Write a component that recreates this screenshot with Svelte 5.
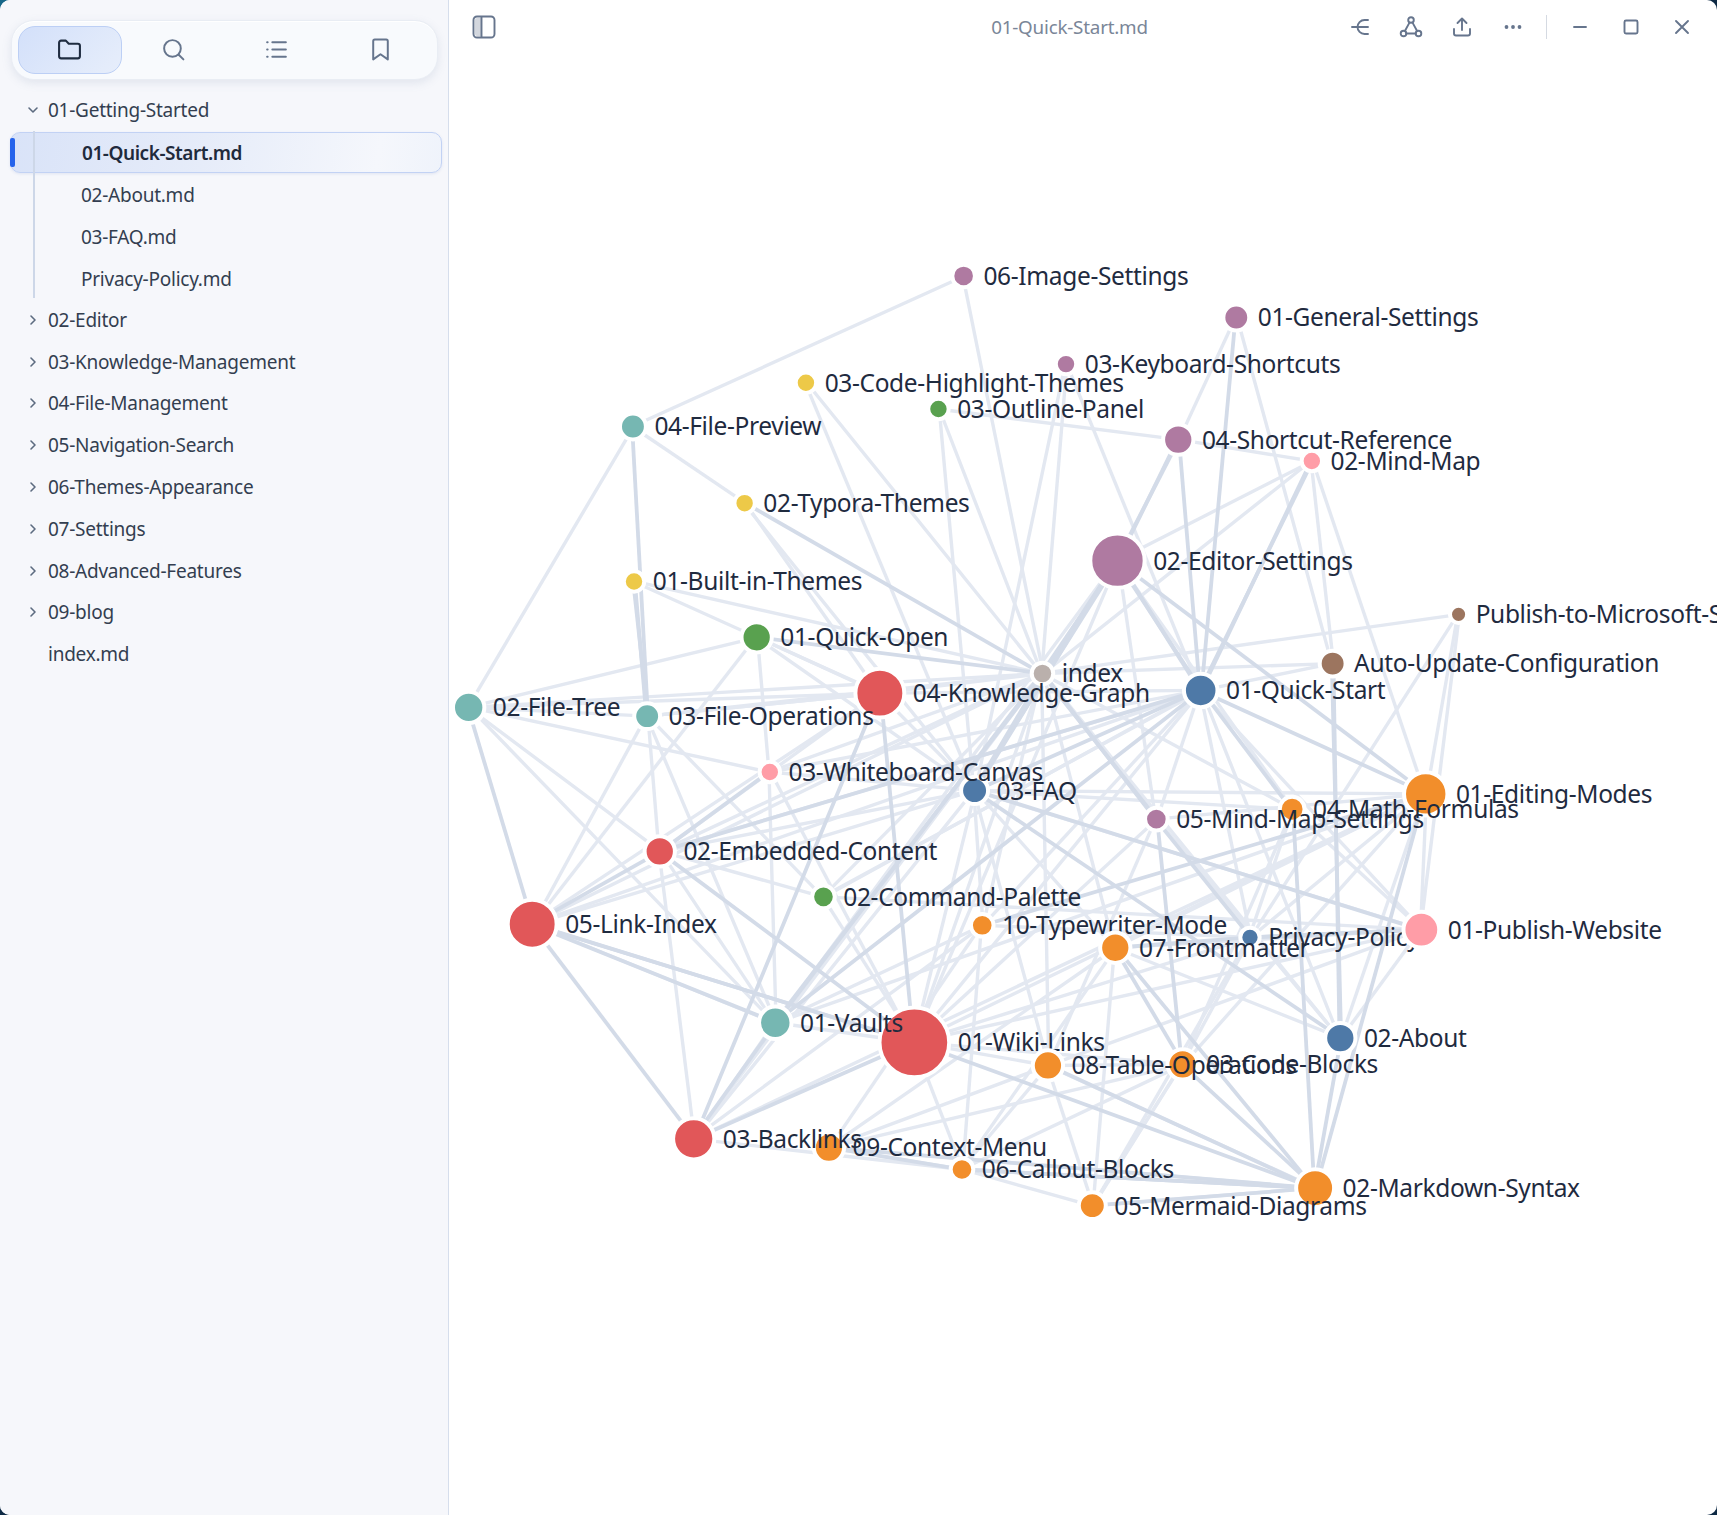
<script>
  // Knowledge graph view: sidebar file tree on the left, force-graph snapshot on the right.
  const S = 1717 / 1568;
  const C = {
    purple: '#af7aa1', red: '#e15759', orange: '#f28e2b', teal: '#76b7b2', green: '#59a14f',
    yellow: '#edc948', pink: '#ff9da7', brown: '#9c755f', blue: '#4e79a7', grey: '#bab0ac'
  };

  // key, x, y, r, colour, label — order is paint order
  const raw = [
    ['IMG', 880, 252, 8.5, 'purple', '06-Image-Settings'],
    ['GS', 1129, 290, 10, 'purple', '01-General-Settings'],
    ['KS', 973.5, 332.5, 7.5, 'purple', '03-Keyboard-Shortcuts'],
    ['CH', 736, 349.5, 7.5, 'yellow', '03-Code-Highlight-Themes'],
    ['OP', 857, 373.5, 7.5, 'green', '03-Outline-Panel'],
    ['FP', 578, 389.5, 10, 'teal', '04-File-Preview'],
    ['SR', 1076, 401.5, 12, 'purple', '04-Shortcut-Reference'],
    ['MP', 1198, 421, 7.5, 'pink', '02-Mind-Map'],
    ['TY', 680, 459.5, 7.5, 'yellow', '02-Typora-Themes'],
    ['ED', 1020.5, 512, 23, 'purple', '02-Editor-Settings'],
    ['BI', 579, 531, 7.5, 'yellow', '01-Built-in-Themes'],
    ['PM', 1332, 561, 6, 'brown', 'Publish-to-Microsoft-Store'],
    ['QO', 691, 582, 12, 'green', '01-Quick-Open'],
    ['AU', 1217, 606, 10, 'brown', 'Auto-Update-Configuration'],
    ['IX', 952, 615, 8, 'grey', 'index'],
    ['KG', 803.5, 633, 20.5, 'red', '04-Knowledge-Graph'],
    ['QS', 1096.5, 630.5, 13.5, 'blue', '01-Quick-Start'],
    ['FT', 428, 646, 12.5, 'teal', '02-File-Tree'],
    ['FO', 591, 654, 10, 'teal', '03-File-Operations'],
    ['FAQ', 890, 722, 10.5, 'blue', '03-FAQ'],
    ['WB', 703, 705, 7.5, 'pink', '03-Whiteboard-Canvas'],
    ['EM', 1302, 725, 18, 'orange', '01-Editing-Modes'],
    ['MF', 1180, 739, 9.5, 'orange', '04-Math-Formulas'],
    ['MS', 1056, 748, 8.5, 'purple', '05-Mind-Map-Settings'],
    ['EC', 602.5, 777.5, 12, 'red', '02-Embedded-Content'],
    ['CP', 752, 819, 8.5, 'green', '02-Command-Palette'],
    ['LI', 486, 844, 20.5, 'red', '05-Link-Index'],
    ['PR', 1141.5, 856, 7, 'blue', 'Privacy-Policy'],
    ['PW', 1298, 849, 14.5, 'pink', '01-Publish-Website'],
    ['TW', 897, 845, 8.5, 'orange', '10-Typewriter-Mode'],
    ['FM', 1018.5, 865.5, 12, 'orange', '07-Frontmatter'],
    ['WI', 835, 952, 30, 'red', '01-Wiki-Links'],
    ['VA', 708, 934, 13, 'teal', '01-Vaults'],
    ['AB', 1224, 948, 12, 'blue', '02-About'],
    ['CB', 1080, 972, 12, 'orange', '03-Code-Blocks'],
    ['TO', 957, 973, 12, 'orange', '08-Table-Operations'],
    ['CM', 757, 1048, 12, 'orange', '09-Context-Menu'],
    ['BL', 633.5, 1040, 17, 'red', '03-Backlinks'],
    ['CO', 878.5, 1068, 8.5, 'orange', '06-Callout-Blocks'],
    ['MD', 1201, 1085, 15.5, 'orange', '02-Markdown-Syntax'],
    ['MM', 997.5, 1101, 10.5, 'orange', '05-Mermaid-Diagrams']
  ];
  const nodes = raw.map(([id, x, y, r, c, label]) => ({ id, x: x * S, y: y * S, r: r * S, color: C[c], label }));
  const byId = Object.fromEntries(nodes.map((n) => [n.id, n]));

  const thin = `FP IMG|FP FT|FP TY|TY KG|TY FAQ|CH IX|CH FAQ|OP IX|OP SR|OP FAQ|IMG IX|KS IX|KS FAQ|KS QS|GS SR|GS AU|MP SR|MP ED|MP IX|MP EM|MP AU|PM IX|PM EM|PM PW|PM PR|AU IX|AU QS|BI IX|BI KG|QO FT|QO LI|QO WB|QO FAQ|QO KG|FT KG|FT IX|FT FO|FT WB|FT EC|FT VA|FO KG|FO IX|FO LI|FO EC|FO VA|FO CP|KG IX|KG QS|KG FAQ|KG FO|KG EC|KG LI|WB VA|WB WI|WB IX|WB QS|WB FAQ|EC IX|EC QS|EC FAQ|EC BL|EC VA|LI IX|LI FAQ|LI QS|LI VA|CP IX|CP QS|CP EC|CP PW|CP WI|VA WI|VA BL|VA EM|VA TW|FAQ WI|FAQ TW|FAQ FM|FAQ TO|FAQ EM|FAQ PW|FAQ MF|IX TW|IX FM|IX TO|IX WI|IX MF|IX AB|IX PR|QS WI|QS TW|QS CP|QS PR|QS AB|QS PW|ED WI|ED VA|ED MS|ED MF|MS WI|MS TO|MS QS|MS EM|MF PR|MF PW|MF CB|EM PR|EM PW|EM AB|EM FM|EM CB|EM WI|EM BL|PW FM|PW TO|PW WI|PW AB|PR CB|PR TW|PR WI|PR MM|FM CO|FM MM|FM CM|TW CO|TW BL|TW CM|WI TO|WI CO|WI CB|TO CB|TO CO|TO MM|TO CM|TO MD|CB CO|CB MM|CB CM|CM CO|CM MD|BL CO|BL FAQ|BL IX|AB FM|AB MS|MM MD|MM CO|MM CB`;
  const thick = `FP FO|BI FO|BI FO|TY IX|SR ED|SR ED|ED IX|ED IX|ED FAQ|ED FAQ|ED QS|ED QS|ED EM|SR QS|GS QS|MP QS|MP QS|QO IX|LI EC|LI FT|LI WI|LI WI|LI BL|EC WB|EC WI|KG WI|KG BL|IX MS|IX MS|IX FAQ|IX VA|IX VA|QS FAQ|QS VA|QS EM|QS MF|QS EC|FAQ PW|FAQ AB|VA LI|WI BL|WI MD|BL VA|TW EM|MS PR|MS CB|FM CB|FM MD|FM PR|PW PR|PW PR|AU AB|AU AB|MF MD|EM MD|AB MD|CB MD|TO MD|CO MD|CO MD|CM MD|CM CO|MM MD`;

  const toEdges = (s, w) =>
    s.split('|').map((p, i) => {
      const [a, b] = p.split(' ');
      // repeated pairs get a small nudge, they read as double lines in the original
      const off = i % 2 ? 0.8 : -0.8;
      return { x1: byId[a].x + off, y1: byId[a].y, x2: byId[b].x - off, y2: byId[b].y, w };
    });
  const edges = [...toEdges(thin, 1), ...toEdges(thick, 2)];

  const folders = ['02-Editor', '03-Knowledge-Management', '04-File-Management', '05-Navigation-Search', '06-Themes-Appearance', '07-Settings', '08-Advanced-Features', '09-blog'];
  const children = ['01-Quick-Start.md', '02-About.md', '03-FAQ.md', 'Privacy-Policy.md'];
  const tabs = ['folder', 'search', 'list', 'bookmark'];
</script>

<div class="window">
  <aside class="sidebar">
    <div class="tabbar">
      {#each tabs as t, i}
        <button class="tab" class:on={i === 0} aria-label={t}>
          <svg viewBox="0 0 24 24" class="ticon" class:dark={i === 0}>
            {#if t === 'folder'}
              <path d="M2 5.5a2 2 0 0 1 2-2h4.5l2.8 3H20a2 2 0 0 1 2 2v10a2 2 0 0 1-2 2H4a2 2 0 0 1-2-2z" />
            {:else if t === 'search'}
              <circle cx="11" cy="11" r="8" /><path d="M17 17l4.5 4.5" />
            {:else if t === 'list'}
              <path d="M8 5h13M8 12h13M8 19h13M3 5h.5M3 12h.5M3 19h.5" />
            {:else}
              <path d="M5 4a1.5 1.5 0 0 1 1.5-1.5h11A1.5 1.5 0 0 1 19 4v17.5l-7-5-7 5z" />
            {/if}
          </svg>
        </button>
      {/each}
    </div>

    <nav class="tree">
      <div class="row folder">
        <svg class="chev" viewBox="0 0 12 12"><path d="M2 4l4 4 4-4" /></svg>
        <span>01-Getting-Started</span>
      </div>
      <div class="children">
        {#each children as c, i}
          <div class="row child" class:sel={i === 0}>{c}</div>
        {/each}
      </div>
      {#each folders as f}
        <div class="row folder">
          <svg class="chev" viewBox="0 0 12 12"><path d="M4 2l4 4-4 4" /></svg>
          <span>{f}</span>
        </div>
      {/each}
      <div class="row file">index.md</div>
    </nav>
  </aside>

  <main class="main">
    <header class="bar">
      <svg class="hicon toggle" viewBox="0 0 24 24">
        <path class="fillp" d="M3 5a2 2 0 0 1 2-2h4.5v18H5a2 2 0 0 1-2-2z" />
        <rect x="1.5" y="1.5" width="21" height="21" rx="3.5" /><path d="M9.5 2v20" />
      </svg>
      <div class="title">01-Quick-Start.md</div>
      <div class="actions">
        <svg class="hicon" viewBox="0 0 24 24"><path d="M20 5h-3.5a7 7 0 0 0 0 14H20M4 12h16" /></svg>
        <svg class="hicon" viewBox="0 0 24 24"><circle cx="12" cy="5" r="2.8" /><circle cx="4.5" cy="18.5" r="2.8" /><circle cx="19.5" cy="18.5" r="2.8" /><path d="M10.6 7.4L5.9 16M13.4 7.4l4.7 8.6M7.3 18.5h9.4" /></svg>
        <svg class="hicon" viewBox="0 0 24 24"><path d="M12 15V3.5M7.5 8L12 3.5 16.5 8M4 14v4.5a2 2 0 0 0 2 2h12a2 2 0 0 0 2-2V14" /></svg>
        <svg class="hicon" viewBox="0 0 24 24"><circle class="dot" cx="5.5" cy="12" r="1.9" /><circle class="dot" cx="12" cy="12" r="1.9" /><circle class="dot" cx="18.5" cy="12" r="1.9" /></svg>
        <span class="sep"></span>
        <svg class="hicon" viewBox="0 0 24 24"><path d="M6 12h12" /></svg>
        <svg class="hicon" viewBox="0 0 24 24"><rect x="5.5" y="5.5" width="13" height="13" rx="1.5" /></svg>
        <svg class="hicon" viewBox="0 0 24 24"><path d="M6 6l12 12M18 6L6 18" /></svg>
      </div>
    </header>

    <div class="canvas">
      <svg class="graph" width="1268" height="1461" viewBox="449 54 1268 1461">
        {#each edges as e}
          <line x1={e.x1} y1={e.y1} x2={e.x2} y2={e.y2} class={e.w === 2 ? 'e2' : 'e1'} />
        {/each}
        {#each nodes as n (n.id)}
          <circle cx={n.x} cy={n.y} r={n.r + 2} fill={n.color} class="node" />
          <text x={n.x + n.r + 10.5} y={n.y + 8.9}>{n.label}</text>
        {/each}
      </svg>
    </div>
  </main>
</div>

<style>
  :global(body) {
    background: linear-gradient(135deg, #17688a 0, #0e2a45 6%, #0e2a45 100%);
    font-family: 'Noto Sans', 'Open Sans', sans-serif;
  }
  .window {
    display: flex;
    height: 1515px;
    border-radius: 10px;
    overflow: hidden;
    background: #fff;
  }
  .sidebar {
    width: 448px;
    flex: none;
    background: #f6f7fb;
    border-right: 1.5px solid #d6deec;
    box-sizing: content-box;
  }
  .tabbar {
    display: grid;
    grid-template-columns: repeat(4, 1fr);
    margin: 19.5px 0 0 11px;
    width: 414px;
    padding: 5px 5px 5px 6px;
    box-sizing: content-box;
    height: 48px;
    border-radius: 23px;
    background: #f8fafd;
    border: 1px solid #e9edf4;
    box-shadow: 0 3px 10px rgba(120, 135, 165, 0.16), inset 0 1px 0 #fff;
  }
  .tab {
    display: grid;
    place-items: center;
    border: 1px solid transparent;
    background: none;
    border-radius: 17px;
    padding: 0;
  }
  .tab.on {
    background: linear-gradient(135deg, #d3e0fa, #e7eefb);
    border-color: #bccff5;
  }
  .ticon {
    width: 25px;
    height: 25px;
    fill: none;
    stroke: #66758d;
    stroke-width: 1.9;
    stroke-linecap: round;
    stroke-linejoin: round;
  }
  .ticon.dark {
    stroke: #1f2c40;
    stroke-width: 2;
  }
  .tree {
    margin-top: 9.5px;
    color: #333e50;
    font-size: 19px;
    letter-spacing: -0.25px;
  }
  .row {
    height: 41.8px;
    display: flex;
    align-items: center;
    box-sizing: border-box;
  }
  .folder {
    padding-left: 27px;
    gap: 9px;
  }
  .chev {
    width: 12px;
    height: 12px;
    fill: none;
    stroke: #5d6b80;
    stroke-width: 1.6;
    stroke-linecap: round;
    stroke-linejoin: round;
  }
  .children {
    position: relative;
    margin: 1.7px 0 -0.7px;
  }
  .children::before {
    content: '';
    position: absolute;
    left: 33px;
    top: -1px;
    height: 167px;
    width: 1.5px;
    background: #cdd7e8;
    z-index: 1;
  }
  .child {
    padding-left: 81px;
  }
  .child.sel {
    position: relative;
    margin: 0 6px 0.8px 10px;
    padding-left: 71px;
    height: 41px;
    font-weight: 600;
    letter-spacing: -0.45px;
    color: #1f2a3c;
    background: linear-gradient(100deg, #d9e3f8 0, #e6ecf9 45%, #f5f7fc 85%, #eff3fb 100%);
    border: 1px solid #c2d2f4;
    border-radius: 10px;
    box-shadow: 0 1px 3px rgba(120, 145, 200, 0.18);
  }
  .child.sel::before {
    content: '';
    position: absolute;
    left: -1px;
    top: 5px;
    bottom: 5px;
    width: 5px;
    border-radius: 2px;
    background: #2563eb;
  }
  .file {
    padding-left: 48px;
  }
  .main {
    flex: 1;
    min-width: 0;
    display: flex;
    flex-direction: column;
  }
  .bar {
    height: 54px;
    flex: none;
    display: flex;
    align-items: center;
    position: relative;
  }
  .toggle {
    margin-left: 23px;
  }
  .title {
    position: absolute;
    left: 0;
    right: 27px;
    top: 14px;
    text-align: center;
    color: #7a8698;
    font-size: 18.8px;
    letter-spacing: -0.2px;
  }
  .actions {
    margin-left: auto;
    margin-right: 23px;
    display: flex;
    align-items: center;
    gap: 27px;
  }
  .hicon {
    width: 24px;
    height: 24px;
    flex: none;
    fill: none;
    stroke: #66758d;
    stroke-width: 1.9;
    stroke-linecap: round;
    stroke-linejoin: round;
  }
  .fillp {
    fill: #d3d7de;
    stroke: none;
  }
  .dot {
    fill: #66758d;
    stroke: none;
  }
  .sep {
    width: 1px;
    height: 24px;
    background: #d5dae2;
    margin: 0 -6px;
  }
  .canvas {
    flex: 1;
    min-height: 0;
  }
  .graph {
    display: block;
  }
  .e1 {
    stroke: #e3e8f1;
    stroke-width: 3.4;
  }
  .e2 {
    stroke: #d3dbe8;
    stroke-width: 3.8;
  }
  .node {
    stroke: #fff;
    stroke-width: 4;
  }
  text {
    font-family: 'Noto Sans', 'Open Sans', sans-serif;
    font-size: 24.5px;
    letter-spacing: -0.35px;
    fill: #1f2b3f;
  }
</style>
